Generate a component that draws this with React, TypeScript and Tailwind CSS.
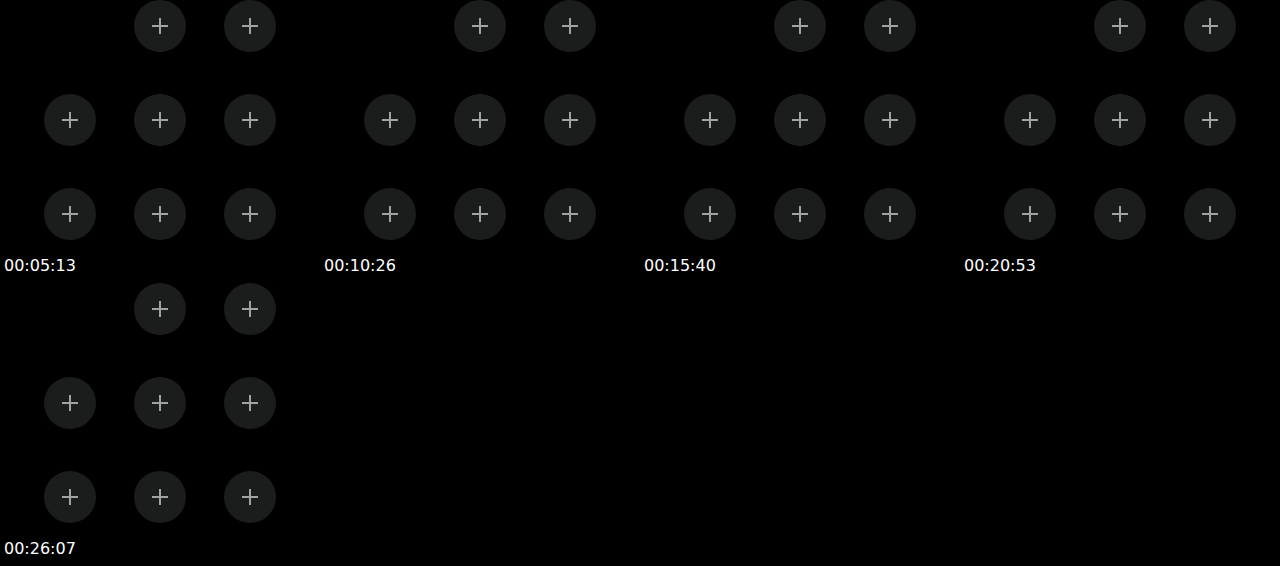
const frames = ["00:05:13", "00:10:26", "00:15:40", "00:20:53", "00:26:07"];

// which of the 3x3 slots show a button (top-left one is empty)
const slots = [false, true, true, true, true, true, true, true, true];

function PlusButton() {
  return (
    <div className="flex h-[52px] w-[52px] items-center justify-center rounded-full bg-[#1b1c1c]">
      <svg width="18" height="18" viewBox="0 0 18 18" fill="none">
        <path d="M9 1v16M1 9h16" stroke="#a2a2a2" strokeWidth="2" />
      </svg>
    </div>
  );
}

function Frame({ time }: { time: string }) {
  return (
    <div className="flex h-[283px] w-[320px] flex-col">
      <div className="h-[256px] pl-[44px]">
        <div className="grid grid-cols-[52px_52px_52px] gap-x-[38px] gap-y-[42px]">
          {slots.map((show, i) =>
            show ? <PlusButton key={i} /> : <div key={i} className="h-[52px] w-[52px]" />
          )}
        </div>
      </div>
      <div className="pl-[4px] font-['DejaVu_Sans',sans-serif] text-[16px] leading-[19px] text-white">
        {time}
      </div>
    </div>
  );
}

export default function App() {
  return (
    <div className="h-[566px] w-[1280px] overflow-hidden bg-black">
      <div className="grid grid-cols-4">
        {frames.map((t) => (
          <Frame key={t} time={t} />
        ))}
      </div>
    </div>
  );
}
